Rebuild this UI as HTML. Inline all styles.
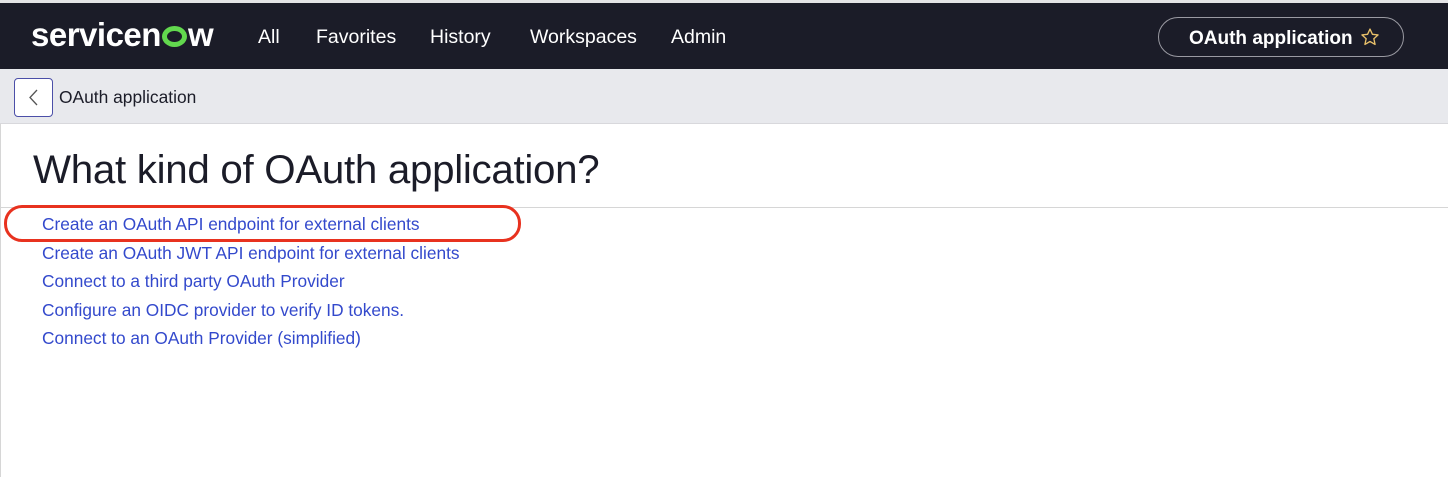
<!DOCTYPE html>
<html><head><meta charset="utf-8"><style>
*{margin:0;padding:0;box-sizing:border-box}
body{width:1448px;height:477px;overflow:hidden;background:#fff;font-family:"Liberation Sans",sans-serif;position:relative}
.top{position:absolute;left:0;top:0;width:1448px;height:3px;background:#e4e4e6}
.hdr{position:absolute;left:0;top:3px;width:1448px;height:66px;background:#1b1c28;color:#fff}
.logo{position:absolute;left:31px;top:13px;font-size:33px;font-weight:bold;letter-spacing:-0.5px}
.nav{position:absolute;top:23px;font-size:19.5px}
.pill{position:absolute;left:1158px;top:14px;width:246px;height:40px;border:1px solid #9a9aa2;border-radius:20px;font-size:19px;font-weight:bold;padding:9px 0 0 30px}
.sub{position:absolute;left:0;top:69px;width:1448px;height:55px;background:#e8e9ed;border-bottom:1px solid #d8d8dc}
.back{position:absolute;left:14px;top:9px;width:39px;height:39px;border:1px solid #4b4fa8;border-radius:4px;background:#fff}
.subt{position:absolute;left:59px;top:18px;font-size:17.4px;color:#1b1c28}
h1{position:absolute;left:33px;top:147px;font-size:40.3px;font-weight:normal;color:#1b1c28;letter-spacing:-0.3px}
.hr{position:absolute;left:0;top:207px;width:1448px;height:1px;background:#d6d6d6}
.lb{position:absolute;left:0;top:124px;width:1px;height:353px;background:#d6d6d6}
.links{position:absolute;left:42px;top:210px;font-size:17.3px;color:#3349cc;line-height:28.5px}
.ring{position:absolute;left:4px;top:205px;width:517px;height:37px;border:3px solid #e8321f;border-radius:18px}
</style></head><body>
<div class="top"></div>
<div class="hdr">
<div class="logo">servicen<span style="display:inline-block;width:25px;height:21px;border:5px solid #62d84e;border-radius:50%;vertical-align:-1px;margin:0 1px"></span>w</div>
<div class="nav" style="left:258px">All</div>
<div class="nav" style="left:316px">Favorites</div>
<div class="nav" style="left:430px">History</div>
<div class="nav" style="left:530px">Workspaces</div>
<div class="nav" style="left:671px">Admin</div>
<div class="pill">OAuth application <svg width="20" height="20" viewBox="0 0 24 24" style="vertical-align:-3px;margin-left:2px"><path d="M12 2.5l2.9 6.3 6.8.7-5.1 4.6 1.5 6.8L12 17.4l-6.1 3.5 1.5-6.8-5.1-4.6 6.8-.7z" fill="none" stroke="#e8c06a" stroke-width="1.6" stroke-linejoin="round"/></svg></div>
</div>
<div class="sub">
<div class="back"><svg width="37" height="37" viewBox="0 0 37 37"><path d="M22 11l-7 7.5 7 7.5" fill="none" stroke="#555" stroke-width="1.3"/></svg></div>
<div class="subt">OAuth application</div>
</div>
<div class="lb"></div>
<h1>What kind of OAuth application?</h1>
<div class="hr"></div>
<div class="links">
<div>Create an OAuth API endpoint for external clients</div>
<div>Create an OAuth JWT API endpoint for external clients</div>
<div>Connect to a third party OAuth Provider</div>
<div>Configure an OIDC provider to verify ID tokens.</div>
<div>Connect to an OAuth Provider (simplified)</div>
</div>
<div class="ring"></div>
</body></html>
